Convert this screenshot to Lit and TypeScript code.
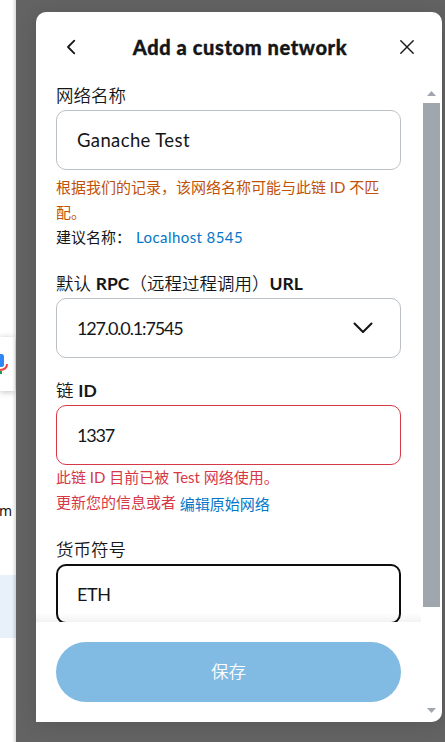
import { LitElement, html, css } from "lit";
import { customElement, property } from "lit/decorators.js";

const sans = css`"Lato", "Noto Sans CJK SC", sans-serif`;

@customElement("page-strip")
class PageStrip extends LitElement {
  static styles = css`
    :host { display: block; width: 16px; height: 742px; overflow: hidden; background: #fff; box-sizing: border-box; padding-top: 337px; position: relative; }
    .search { height: 54px; background: #fff; box-shadow: 0 1px 6px rgba(32, 33, 36, 0.28); display: flex; align-items: center; margin-right: 1px; }
    .search svg { display: block; width: 9px; height: 30px; }
    .mail { margin-top: 108px; height: 24px; font: 14px/24px "Noto Sans", sans-serif; color: #111; text-indent: -1px; }
    .band { margin-top: 52px; height: 63px; background: #e8f0fa; }
    .edge { position: absolute; right: 0; top: 0; width: 4px; height: 100%; background: linear-gradient(to right, rgba(70, 80, 75, 0), rgba(70, 80, 75, 0.2)); }
  `;
  render() {
    return html`
      <div class="search">
        <svg viewBox="0 0 9 30">
          <rect x="-5" y="5" width="9" height="13" rx="2.5" fill="#3186f6"></rect>
          <path d="M7 15c0 4-3 6-8 6" fill="none" stroke="#f04438" stroke-width="2"></path>
          <rect x="-1" y="22" width="3" height="3" fill="#16a15a"></rect>
        </svg>
      </div>
      <div class="mail">m</div>
      <div class="band"></div>
      <div class="edge"></div>
    `;
  }
}

@customElement("net-field")
class NetField extends LitElement {
  @property() tone = "plain";
  @property({ type: Boolean }) dropdown = false;
  static styles = css`
    :host { display: block; font-family: ${sans}; color: #141618; }
    .label { height: 28px; font-size: 17.5px; line-height: 27px; font-weight: 350; white-space: nowrap; }
    .box { height: 60px; box-sizing: border-box; border: 1px solid #bbc0c5; border-radius: 10px; padding: 0 20px; display: flex; align-items: center; justify-content: space-between; font-size: 18.5px; line-height: 26px; background: #fff; }
    .error { border-color: #d73847; }
    .focus { border: 2px solid #0c0d0e; padding: 0 19px; }
    .value { white-space: nowrap; }
    svg { display: block; width: 20px; height: 12px; margin-right: 7px; }
  `;
  render() {
    return html`
      <div class="label"><slot name="label"></slot></div>
      <div class="box ${this.tone}">
        <span class="value"><slot name="value"></slot></span>
        ${this.dropdown
          ? html`<svg viewBox="0 0 20 12"><path d="M1.5 1.5L10 10L18.5 1.5" fill="none" stroke="#141618" stroke-width="2.1" stroke-linecap="round" stroke-linejoin="round"></path></svg>`
          : null}
      </div>
      <slot></slot>
    `;
  }
}

@customElement("app-root")
class AppRoot extends LitElement {
  static styles = css`
    :host { display: flex; width: 445px; height: 742px; overflow: hidden; background: #636363; font-family: ${sans}; color: #141618; }
    .backdrop { width: 429px; height: 742px; box-sizing: border-box; padding: 12px 3px 20px 20px; background: #636363; }
    .dialog { width: 406px; height: 710px; background: #fff; border-radius: 10px 10px 10px 0; box-shadow: 0 2px 20px rgba(0, 0, 0, 0.12); overflow: hidden; }
    .header { height: 70px; box-sizing: border-box; padding: 0 27px 0 29px; display: flex; align-items: center; justify-content: space-between; }
    .header svg { display: block; }
    .title { font: 900 20px/28px "Lato", sans-serif; letter-spacing: 0.6px; -webkit-text-stroke: 0.35px #141618; margin-left: 4px; padding-bottom: 1px; white-space: nowrap; }
    .main { display: flex; height: 640px; }
    .column { width: 385px; height: 640px; }
    .scroll { height: 540px; overflow: hidden; box-sizing: border-box; padding: 0 20px; position: relative; }
    .scroll::after { content: ""; position: absolute; left: 0; right: 0; bottom: 0; height: 9px; background: linear-gradient(to bottom, rgba(0, 0, 0, 0), rgba(0, 0, 0, 0.05)); }
    .note { font-size: 15px; line-height: 25px; white-space: nowrap; }
    .first { height: 100px; box-sizing: border-box; padding-top: 5px; }
    .second { height: 19px; }
    .third { height: 71px; }
    .warn { color: #bf5208; }
    .err { color: #d73847; }
    .link { color: #0376c9; }
    .suggest { margin-left: 5px; letter-spacing: 0.42px; }
    .edit { display: inline-block; line-height: 22px; position: relative; top: 2px; }
    .strong { font-family: "Lato", sans-serif; font-weight: 700; }
    .ganache { letter-spacing: 0.38px; }
    .digits { font-size: 18px; letter-spacing: -1.15px; }
    .eth { font-size: 18px; letter-spacing: -0.4px; }
    .footer { height: 100px; box-sizing: border-box; padding: 20px; background: #fff; }
    .save { height: 60px; border: 0; border-radius: 30px; background: #81bae2; color: #fff; display: flex; align-items: center; justify-content: center; font: 350 17.5px/28px "Noto Sans CJK SC", sans-serif; width: 345px; padding: 0 0 2px; }
    .bar { width: 21px; height: 640px; box-sizing: border-box; padding: 9px 2px 9px 2px; display: flex; flex-direction: column; align-items: center; }
    .bar svg { display: block; width: 9px; height: 5px; }
    .thumb { width: 17px; height: 504px; background: #9fa6ae; margin: 7px 0 auto; }
  `;
  render() {
    return html`
      <page-strip></page-strip>
      <div class="backdrop">
        <div class="dialog">
          <div class="header">
            <svg width="12" height="18" viewBox="0 0 12 18"><path d="M9.3 2.6L3 9L9.3 15.4" fill="none" stroke="#141618" stroke-width="1.8" stroke-linecap="round" stroke-linejoin="round"></path></svg>
            <div class="title">Add a custom network</div>
            <svg width="16" height="16" viewBox="0 0 16 16"><path d="M1.8 1.8L14.2 14.2M14.2 1.8L1.8 14.2" fill="none" stroke="#141618" stroke-width="1.4" stroke-linecap="round"></path></svg>
          </div>
          <div class="main">
            <div class="column">
              <div class="scroll">
                <net-field>
                  <span slot="label">网络名称</span>
                  <span slot="value" class="ganache">Ganache Test</span>
                  <div class="note first">
                    <div class="warn">根据我们的记录，该网络名称可能与此链 ID 不匹<br />配。</div>
                    <div>建议名称：<span class="link suggest">Localhost 8545</span></div>
                  </div>
                </net-field>
                <net-field dropdown>
                  <span slot="label">默认 <span class="strong">RPC</span>（远程过程调用）<span class="strong">URL</span></span>
                  <span slot="value" class="digits">127.0.0.1:7545</span>
                  <div class="second"></div>
                </net-field>
                <net-field tone="error">
                  <span slot="label">链 <span class="strong">ID</span></span>
                  <span slot="value" class="digits">1337</span>
                  <div class="note third err">此链 ID 目前已被 Test 网络使用。<br />更新您的信息或者 <span class="link edit">编辑原始网络</span></div>
                </net-field>
                <net-field tone="focus">
                  <span slot="label">货币符号</span>
                  <span slot="value" class="eth">ETH</span>
                </net-field>
              </div>
              <div class="footer"><button class="save">保存</button></div>
            </div>
            <div class="bar">
              <svg viewBox="0 0 9 5"><path d="M0 5L4.5 0L9 5Z" fill="#9fa6ae"></path></svg>
              <div class="thumb"></div>
              <svg viewBox="0 0 9 5"><path d="M0 0L4.5 5L9 0Z" fill="#9fa6ae"></path></svg>
            </div>
          </div>
        </div>
      </div>
    `;
  }
}
